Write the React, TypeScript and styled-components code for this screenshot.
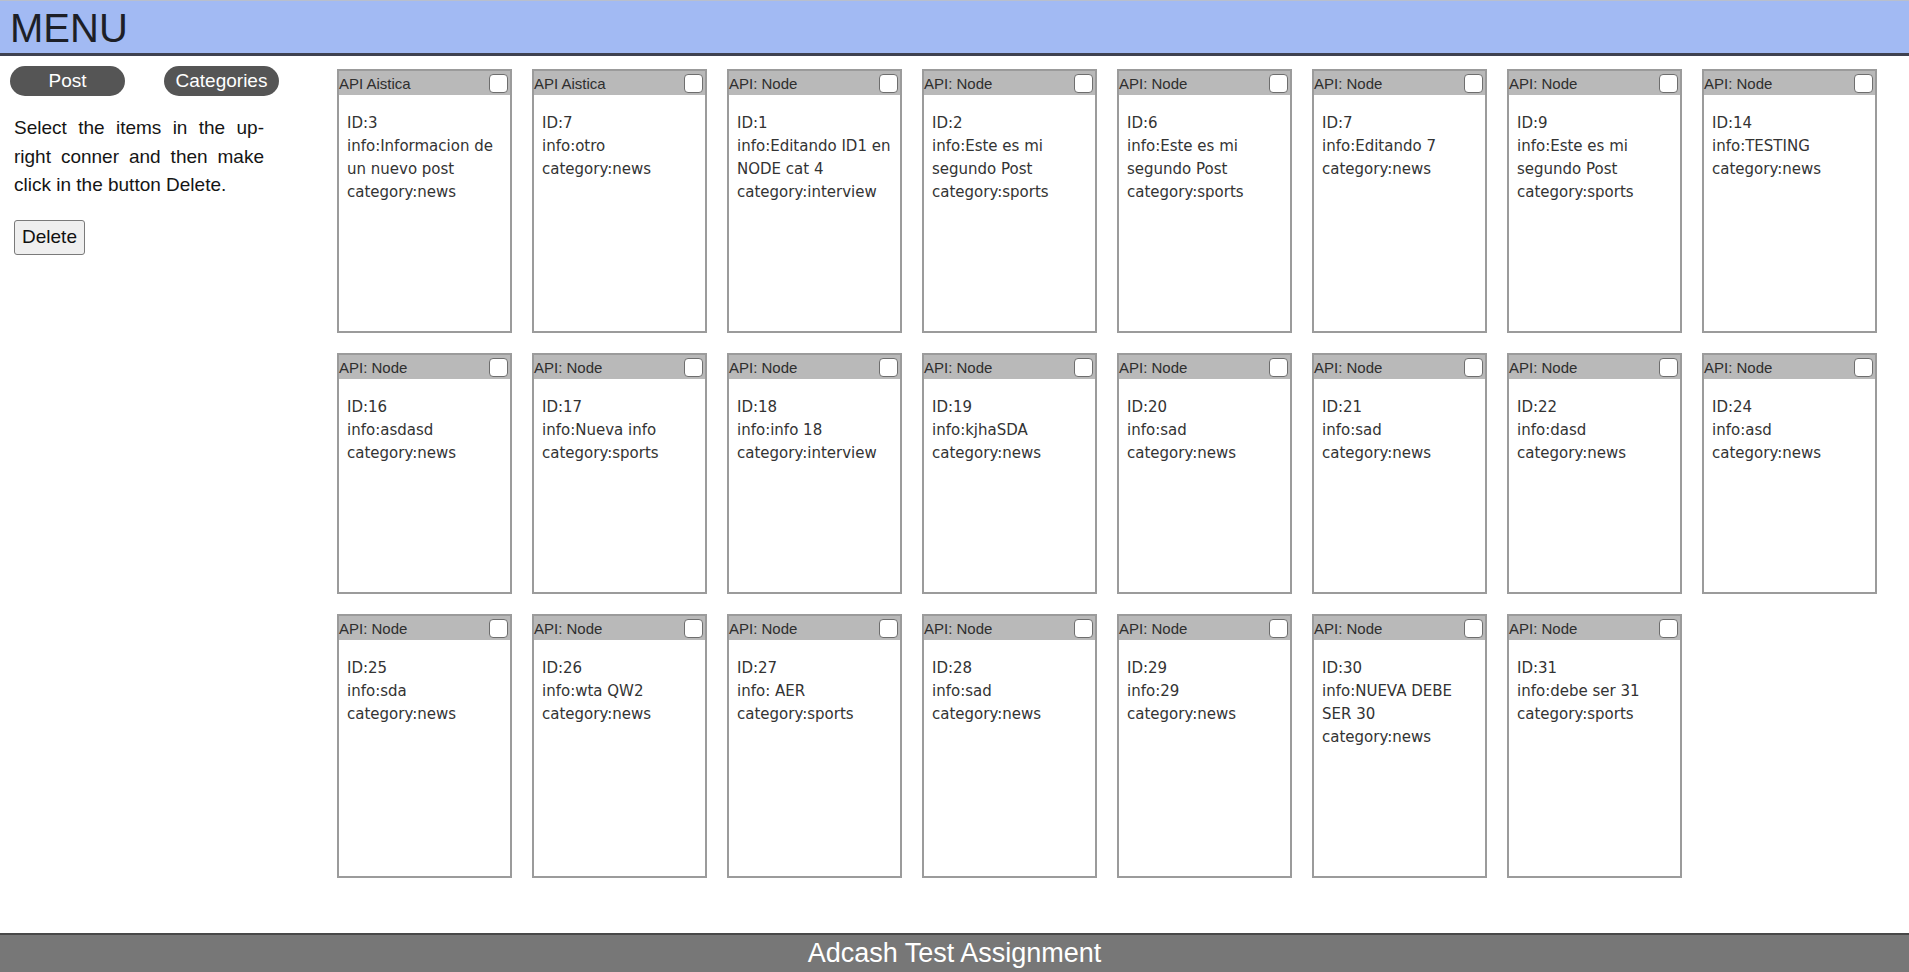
import styled, { createGlobalStyle } from 'styled-components';

type Post = {
    api: string;
    id: number;
    info: string;
    category: string;
};

const posts: Post[] = [
    { api: 'API Aistica', id: 3, info: 'Informacion de un nuevo post', category: 'news' },
    { api: 'API Aistica', id: 7, info: 'otro', category: 'news' },
    { api: 'API: Node', id: 1, info: 'Editando ID1 en NODE cat 4', category: 'interview' },
    { api: 'API: Node', id: 2, info: 'Este es mi segundo Post', category: 'sports' },
    { api: 'API: Node', id: 6, info: 'Este es mi segundo Post', category: 'sports' },
    { api: 'API: Node', id: 7, info: 'Editando 7', category: 'news' },
    { api: 'API: Node', id: 9, info: 'Este es mi segundo Post', category: 'sports' },
    { api: 'API: Node', id: 14, info: 'TESTING', category: 'news' },
    { api: 'API: Node', id: 16, info: 'asdasd', category: 'news' },
    { api: 'API: Node', id: 17, info: 'Nueva info', category: 'sports' },
    { api: 'API: Node', id: 18, info: 'info 18', category: 'interview' },
    { api: 'API: Node', id: 19, info: 'kjhaSDA', category: 'news' },
    { api: 'API: Node', id: 20, info: 'sad', category: 'news' },
    { api: 'API: Node', id: 21, info: 'sad', category: 'news' },
    { api: 'API: Node', id: 22, info: 'dasd', category: 'news' },
    { api: 'API: Node', id: 24, info: 'asd', category: 'news' },
    { api: 'API: Node', id: 25, info: 'sda', category: 'news' },
    { api: 'API: Node', id: 26, info: 'wta QW2', category: 'news' },
    { api: 'API: Node', id: 27, info: ' AER', category: 'sports' },
    { api: 'API: Node', id: 28, info: 'sad', category: 'news' },
    { api: 'API: Node', id: 29, info: '29', category: 'news' },
    { api: 'API: Node', id: 30, info: 'NUEVA DEBE SER 30', category: 'news' },
    { api: 'API: Node', id: 31, info: 'debe ser 31', category: 'sports' },
];

const GlobalStyle = createGlobalStyle`
    body {
        margin: 0;
        font-family: "Liberation Sans", Arial, sans-serif;
        background: #fff;
    }
`;

const Page = styled.div`
    min-height: 100vh;
    display: flex;
    flex-direction: column;
`;

const Header = styled.header`
    height: 52px;
    background: #a2baf3;
    border-top: 1px solid #b9bfcc;
    border-bottom: 3px solid #3f4250;
    display: flex;
    align-items: center;
    padding-left: 10px;
`;

const Title = styled.h1`
    margin: 0;
    font-size: 40px;
    font-weight: normal;
    color: #1d1f27;
    line-height: 1;
    padding-top: 2px;
`;

const Content = styled.div`
    display: flex;
    align-items: flex-start;
`;

const Sidebar = styled.aside`
    width: 327px;
    flex-shrink: 0;
    padding-top: 10px;
    box-sizing: border-box;
`;

const TabRow = styled.div`
    display: flex;
    gap: 39px;
    padding-left: 10px;
`;

const PillButton = styled.button`
    width: 115px;
    height: 30px;
    border: none;
    border-radius: 15px;
    background: #555;
    color: #fff;
    font-family: "Liberation Sans", Arial, sans-serif;
    font-size: 19px;
    padding: 0;
    cursor: pointer;
`;

const Help = styled.p`
    margin: 18px 0 0 14px;
    width: 250px;
    font-size: 19px;
    line-height: 28.5px;
    text-align: justify;
    color: #151515;
`;

const DeleteButton = styled.button`
    margin: 20px 0 0 14px;
    width: 71px;
    height: 35px;
    padding: 0;
    font-family: "Liberation Sans", Arial, sans-serif;
    font-size: 19px;
    color: #111;
    background: #efefef;
    border: 1px solid #7a7a7a;
    border-radius: 3px;
`;

const Board = styled.main`
    flex: 1;
    display: flex;
    flex-wrap: wrap;
    align-content: flex-start;
    padding-top: 3px;
`;

const Card = styled.div`
    width: 175px;
    margin: 10px;
    box-sizing: border-box;
    border: 2px solid #9b9b9b;
    background: #fff;
    display: flex;
    flex-direction: column;
`;

const CardHeader = styled.div`
    height: 24px;
    background: #b9b9b9;
    display: flex;
    align-items: center;
    justify-content: space-between;
    padding-right: 2px;
    font-size: 15px;
    color: #2e2e2e;
`;

const Check = styled.input.attrs({ type: 'checkbox' })`
    appearance: none;
    margin: 0;
    width: 19px;
    height: 19px;
    background: #fff;
    border: 1px solid #6e6e6e;
    border-radius: 4px;
    box-sizing: border-box;
`;

const CardBody = styled.div`
    flex: 1;
    padding: 17px 5px 127px 8px;
    font-family: "DejaVu Sans", Verdana, sans-serif;
    font-size: 15px;
    line-height: 23px;
    color: #333;
`;

const Line = styled.div`
    white-space: pre-wrap;
`;

const Footer = styled.footer`
    margin-top: auto;
    height: 37px;
    background: #777;
    border-top: 2px solid #484848;
    display: flex;
    align-items: center;
    justify-content: center;
    color: #fff;
    font-size: 27px;
`;

const App = () => {
    return (
        <Page>
            <GlobalStyle />
            <Header>
                <Title>MENU</Title>
            </Header>
            <Content>
                <Sidebar>
                    <TabRow>
                        <PillButton>Post</PillButton>
                        <PillButton>Categories</PillButton>
                    </TabRow>
                    <Help>
                        Select the items in the up-right conner and then make click in the button Delete.
                    </Help>
                    <DeleteButton>Delete</DeleteButton>
                </Sidebar>
                <Board>
                    {posts.map((post, index) => (
                        <Card key={index}>
                            <CardHeader>
                                <span>{post.api}</span>
                                <Check />
                            </CardHeader>
                            <CardBody>
                                <Line>ID:{post.id}</Line>
                                <Line>info:{post.info}</Line>
                                <Line>category:{post.category}</Line>
                            </CardBody>
                        </Card>
                    ))}
                </Board>
            </Content>
            <Footer>Adcash Test Assignment</Footer>
        </Page>
    );
};

export default App;
